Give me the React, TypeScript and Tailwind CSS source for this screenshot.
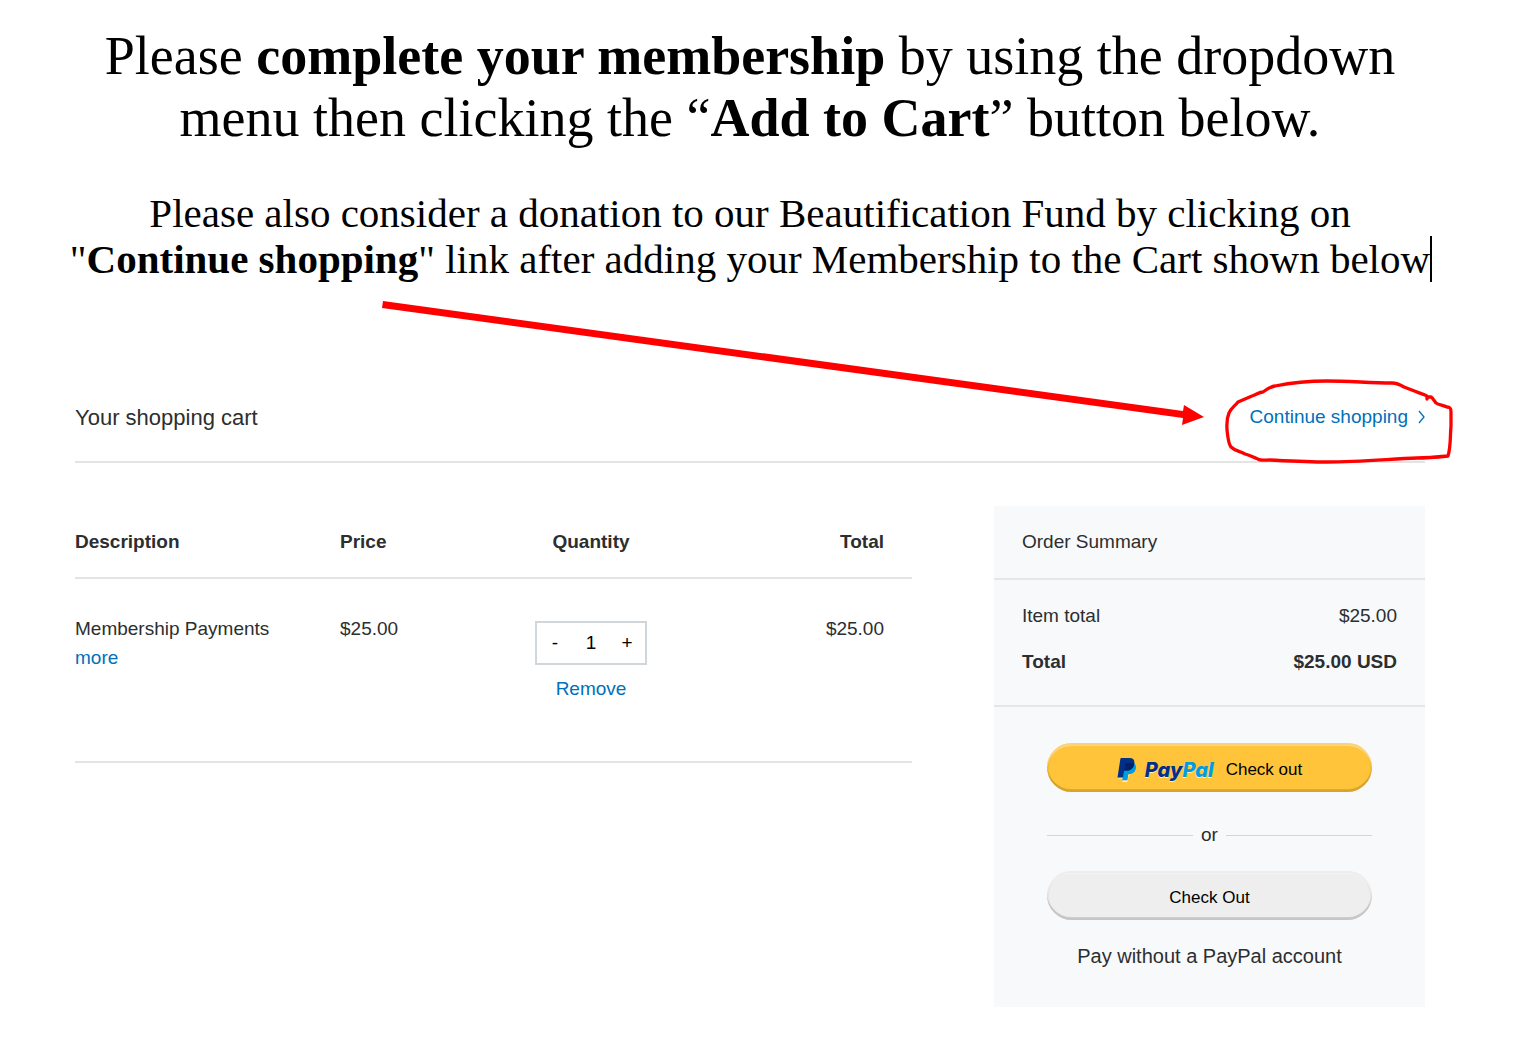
import { useState } from 'react';

interface CartItem {
  id: number;
  name: string;
  price: number;
}

const items: CartItem[] = [{ id: 1, name: 'Membership Payments', price: 25 }];

const money = (value: number): string => `$${value.toFixed(2)}`;

const PayPalMark = (): JSX.Element => (
  <svg className="w-5 h-6 shrink-0" viewBox="0 0 20 24" aria-hidden="true">
    <path d="M.5 20.500H6L5.300 24h5l1.200-5.500 1.500-2z" fill="#fff" opacity="0.7" />
    <path d="M17.300 5.500c1.600 1.200 2 3.100 1.500 5.500-.8 3.400-3.200 5-6.500 5h-.9l-1 6.300H5.300L7 12z" fill="#009cde" />
    <path d="M4.300 0h8.200c3.600 0 5.400 2 4.800 5.700-.8 4.600-3.600 6.800-7.800 6.800H7.200L6 19.500H.5L3.400.8c.1-.5.4-.8.9-.8z" fill="#003087" />
    <path d="M8.300 5h6.500c1 0 1.800.2 2.500.7-.8 4.600-3.600 6.800-7.800 6.800H7.200z" fill="#012169" />
  </svg>
);

const Arrow = (): JSX.Element => (
  <svg
    className="absolute right-[219px] -top-[73px] w-[826px] h-[128px] pointer-events-none"
    viewBox="0 0 826 128"
    aria-hidden="true"
  >
    <path d="M3 1L803 111L804 105L824 117L802 125L803 118L2 8z" fill="#ff0000" />
  </svg>
);

const HandDrawnCircle = (): JSX.Element => (
  <svg
    className="absolute -right-[31px] -top-[29px] w-[236px] h-[90px] pointer-events-none"
    viewBox="0 0 236 90"
    fill="none"
    stroke="#ff0000"
    strokeWidth={3.3}
    strokeLinecap="round"
    strokeLinejoin="round"
    aria-hidden="true"
  >
    <path d="M207 23L207 20C204 18 201 18 197 16L184 11C179 8 177 7 172 7C150 7 130 5 107 5C88 5 70 7 55 10C49 11 46 14 43 16C39 16 36 19 32 20L18 26C15 30 11 32 9 37C6 44 7 50 7 54C8 61 8 67 11 71C15 75 20 75 25 78C30 79 34 82 38 83C40 85 45 84 50 84C70 85 88 86 107 86C140 86 170 83 197 82C208 82 218 81 228 80C231 70 230 60 231 50L231 36C231 32 230 31 227 31C223 29 219 29 216 27C214 25 213 22 211 21L207 21" />
  </svg>
);

const CartTable = (): JSX.Element => {
  const [quantity, setQuantity] = useState<number>(1);

  return (
    <table className="w-full table-fixed border-collapse text-left">
      <thead>
        <tr className="h-[72px] border-b-2 border-[#e4e4e4]">
          <th className="w-[265px] pt-0.5">Description</th>
          <th className="w-[160px] pt-0.5">Price</th>
          <th className="w-[182px] pt-0.5 text-center">Quantity</th>
          <th className="pt-0.5 pr-7 text-right">Total</th>
        </tr>
      </thead>
      <tbody>
        {items.map((item) => (
          <tr key={item.id} className="h-[184px] border-b-2 border-[#e4e4e4] align-top leading-[29px]">
            <td className="pt-[35px]">
              <div>{item.name}</div>
              <a href="#more" className="text-[#0070ba]">more</a>
            </td>
            <td className="pt-[35px]">{money(item.price)}</td>
            <td className="pt-[42px]">
              <div className="flex flex-col items-center gap-[9px]">
                <div className="flex items-center w-28 h-11 pb-0.5 border-2 border-[#d0d6da] text-black">
                  <button
                    className="flex-1"
                    aria-label="Decrease quantity"
                    onClick={() => setQuantity(Math.max(1, quantity - 1))}
                  >
                    -
                  </button>
                  <input
                    className="w-9 text-center outline-none"
                    aria-label="Quantity"
                    value={quantity}
                    onChange={(e) => setQuantity(Number(e.target.value) || 1)}
                  />
                  <button
                    className="flex-1"
                    aria-label="Increase quantity"
                    onClick={() => setQuantity(quantity + 1)}
                  >
                    +
                  </button>
                </div>
                <button className="text-[#0070ba]">Remove</button>
              </div>
            </td>
            <td className="pt-[35px] pr-7 text-right">{money(item.price * quantity)}</td>
          </tr>
        ))}
      </tbody>
    </table>
  );
};

const OrderSummary = (): JSX.Element => (
  <aside className="bg-[#f8f9fb] leading-[26px]">
    <h3 className="px-7 py-[23px] border-b-2 border-[#e4e6e8]">Order Summary</h3>
    <div className="flex flex-col gap-5 px-7 pt-[23px] pb-[30px] border-b-2 border-[#e4e6e8]">
      <div className="flex justify-between">
        <span>Item total</span>
        <span>$25.00</span>
      </div>
      <div className="flex justify-between font-bold">
        <span>Total</span>
        <span>$25.00 USD</span>
      </div>
    </div>

    <div className="px-[53px] pt-9 pb-[38px] text-center">
      <button className="flex items-center justify-center w-full h-[49px] pt-1 rounded-full bg-[#ffc439] shadow-[inset_0_3px_0_rgba(255,255,255,0.35),inset_0_-3px_0_rgba(0,0,0,0.13),inset_0_0_0_2px_rgba(0,0,0,0.04)] text-black text-[17px]">
        <PayPalMark />
        <span className="ml-2 mr-3 font-[Inter] font-extrabold italic text-xl text-[#003087] [text-shadow:0_1px_0_rgba(255,255,255,0.7)]">
          Pay<span className="text-[#009cde]">Pal</span>
        </span>
        <span>Check out</span>
      </button>

      <div className="flex items-center gap-2 mt-[30px]">
        <span className="flex-1 h-px bg-[#d3d5d7]" />
        <span>or</span>
        <span className="flex-1 h-px bg-[#d3d5d7]" />
      </div>

      <button className="w-full h-[49px] mt-[23px] pt-1 rounded-full bg-[#eeeeee] shadow-[inset_0_3px_0_rgba(255,255,255,0.35),inset_0_-3px_0_rgba(0,0,0,0.13),inset_0_0_0_2px_rgba(0,0,0,0.04)] text-black text-[17px]">
        Check Out
      </button>
      <p className="mt-[23px] text-xl leading-[26px]">Pay without a PayPal account</p>
    </div>
  </aside>
);

const App = (): JSX.Element => {
  return (
    <main className="pl-[75px] pr-[102px] pt-[25px] bg-white text-[#2c2e2f] text-[19px] font-['Liberation_Sans',Arial,sans-serif]">
      <div className="-mx-3 text-center text-black font-['Liberation_Serif','Times_New_Roman',serif]">
        <h1 className="text-[54px] leading-[62px]">
          Please <b>complete your membership</b> by using the dropdown
          <br />
          menu then clicking the “<b>Add to Cart</b>” button below.
        </h1>
        <p className="mt-[41px] text-[41px] leading-[46px] whitespace-nowrap">
          Please also consider a donation to our Beautification Fund by clicking on
          <br />
          "<b>Continue shopping</b>" link after adding your Membership to the Cart shown below
          <span className="inline-block w-0.5 h-[46px] -mr-0.5 bg-black align-top" />
        </p>
      </div>

      <header className="relative flex items-center justify-between h-[90px] mt-[91px] border-b-2 border-[#e4e4e4]">
        <h2 className="text-[22px]">Your shopping cart</h2>
        <a href="#shop" className="relative flex items-center gap-2.5 leading-6 text-[#0070ba]">
          Continue shopping
          <svg className="w-[7px] h-[14px]" viewBox="0 0 7 14" fill="none" stroke="currentColor" aria-hidden="true">
            <path d="M1 1L6 7L1 13" strokeWidth={1.3} />
          </svg>
          <HandDrawnCircle />
        </a>
        <Arrow />
      </header>

      <div className="grid grid-cols-[1fr_431px] items-start gap-[82px] mt-[43px] pb-10">
        <CartTable />
        <OrderSummary />
      </div>
    </main>
  );
};

export default App;
